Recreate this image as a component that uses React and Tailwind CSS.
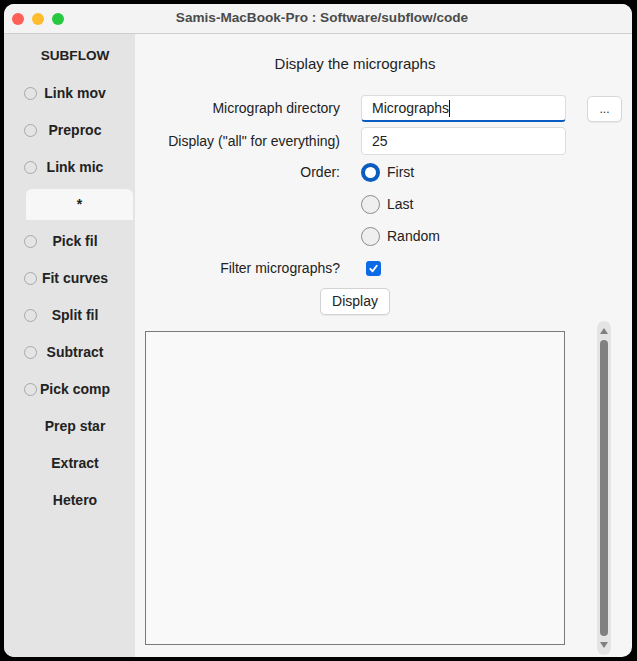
import React, { useState } from "react";

const font = { fontFamily: '"Liberation Sans", Arial, sans-serif' };

const steps = [
  { name: "Link mov", radio: true },
  { name: "Preproc", radio: true },
  { name: "Link mic", radio: true },
  { name: "*", tab: true },
  { name: "Pick fil", radio: true },
  { name: "Fit curves", radio: true },
  { name: "Split fil", radio: true },
  { name: "Subtract", radio: true },
  { name: "Pick comp", radio: true },
  { name: "Prep star", radio: false },
  { name: "Extract", radio: false },
  { name: "Hetero", radio: false },
];

const SideItem = ({ step }) => {
  if (step.tab) {
    return (
      <div className="h-[37px] flex items-center pl-[22px] pr-[2px]">
        <div className="h-[31px] w-full bg-[#f7f7f7] rounded-t-[6px] flex items-center justify-center text-[14px] font-bold text-[#222]">
          {step.name}
        </div>
      </div>
    );
  }
  return (
    <div className="h-[37px] flex items-center pl-[20px]">
      <span
        className={
          "w-[13px] h-[13px] shrink-0 rounded-full border " +
          (step.radio ? "border-[#a8a8a8]" : "border-transparent")
        }
      />
      <span className="w-[76px] text-center text-[14px] font-bold text-[#222] whitespace-nowrap">
        {step.name}
      </span>
    </div>
  );
};

const OrderRadio = ({ label, checked, onClick }) => (
  <div className="h-[32px] flex items-center gap-[7px] cursor-pointer" onClick={onClick}>
    {checked ? (
      <span className="w-[19px] h-[19px] rounded-full border-[4px] border-[#0b5cc0] bg-white" />
    ) : (
      <span className="w-[19px] h-[19px] rounded-full border border-[#8c8c8c] bg-[#efefef]" />
    )}
    <span className="text-[14px] text-[#222]">{label}</span>
  </div>
);

const App = () => {
  const [count, setCount] = useState("25");
  const [order, setOrder] = useState("First");
  const [filter, setFilter] = useState(true);

  return (
    <div className="w-[637px] h-[661px] bg-black pt-[4px] pl-[4px]" style={font}>
      <div className="w-[628px] h-[653px] rounded-[10px] overflow-hidden flex flex-col bg-[#f6f6f6]">
        {/* title bar */}
        <div className="h-[30px] shrink-0 flex items-center bg-[#f3f3f3] border-b border-[#cfcfcf]">
          <div className="flex gap-[8px] pl-[8px]">
            <span className="w-[12px] h-[12px] rounded-full bg-[#fe5f57]" />
            <span className="w-[12px] h-[12px] rounded-full bg-[#febc2e]" />
            <span className="w-[12px] h-[12px] rounded-full bg-[#28c840]" />
          </div>
          <div className="flex-1 text-center text-[13.6px] font-bold text-[#4b4b4b] pr-[52px]">
            Samis-MacBook-Pro : Software/subflow/code
          </div>
        </div>

        <div className="flex flex-1">
          {/* sidebar */}
          <div className="w-[131px] shrink-0 bg-[#e4e4e4] pt-[4px]">
            <div className="h-[37px] flex items-center pl-[33px]">
              <span className="w-[76px] text-center text-[13.6px] font-bold text-[#222]">SUBFLOW</span>
            </div>
            {steps.map((s) => (
              <SideItem key={s.name} step={s} />
            ))}
          </div>

          {/* main */}
          <div className="flex-1 flex flex-col">
            <div className="ml-[10px] w-[420px] pt-[21px] text-center text-[15px] text-[#1e1e1e] leading-[18px]">
              Display the micrographs
            </div>

            <div className="grid grid-cols-[205px_205px_35px] gap-x-[21px] mt-[22px] text-[14px] text-[#222]">
              <div className="h-[27px] flex items-center justify-end">Micrograph directory</div>
              {/* focused entry with caret */}
              <div className="h-[27px] bg-white border border-[#dcdcdc] border-b-2 border-b-[#0b5cc0] rounded-[4px] px-[10px] flex items-center">
                <span>Micrographs</span>
                <span className="w-[1px] h-[17px] bg-[#111]" />
              </div>
              <button className="h-[26px] mt-[1px] bg-white border border-[#d8d8d8] rounded-[5px] text-[12px] text-[#333] shadow-[0_1px_1px_rgba(0,0,0,0.06)]">
                ...
              </button>

              <div className="h-[28px] mt-[5px] flex items-center justify-end">
                Display ("all" for everything)
              </div>
              <input
                value={count}
                onChange={(e) => setCount(e.target.value)}
                className="h-[28px] mt-[5px] bg-white border border-[#dcdcdc] rounded-[4px] px-[10px] text-[14px] outline-none"
                style={font}
              />
              <div />

              <div className="h-[32px] mt-[1px] flex items-center justify-end">Order:</div>
              <div className="mt-[1px]">
                {["First", "Last", "Random"].map((o) => (
                  <OrderRadio key={o} label={o} checked={order === o} onClick={() => setOrder(o)} />
                ))}
              </div>
              <div />

              <div className="h-[31px] mt-[1px] flex items-center justify-end">Filter micrographs?</div>
              <div className="h-[31px] mt-[1px] flex items-center pl-[5px]">
                <button
                  onClick={() => setFilter(!filter)}
                  className={
                    "w-[15px] h-[15px] rounded-[3px] flex items-center justify-center " +
                    (filter ? "bg-[#0b6ae6]" : "bg-white border border-[#999]")
                  }
                >
                  {filter && (
                    <svg width="11" height="11" viewBox="0 0 12 12">
                      <path d="M2.5 6.5 L5 9 L9.5 3" fill="none" stroke="white" strokeWidth="2" strokeLinecap="round" strokeLinejoin="round" />
                    </svg>
                  )}
                </button>
              </div>
              <div />
            </div>

            <div className="ml-[10px] w-[420px] flex justify-center mt-[4px]">
              <button className="w-[70px] h-[27px] bg-white border border-[#d2d2d2] rounded-[5px] text-[14px] text-[#222] shadow-[0_1px_1px_rgba(0,0,0,0.06)]">
                Display
              </button>
            </div>

            <div className="flex items-center mt-[6px] pl-[10px]">
              <div className="w-[420px] h-[314px] bg-[#f9f9f9] border border-[#7a7a7a]" />
              <div className="ml-[32px] w-[14px] h-[334px] rounded-full bg-[#e4e4e4] flex flex-col items-center py-[7px]">
                <svg width="8" height="6" viewBox="0 0 8 6">
                  <path d="M4 0 L8 6 L0 6 Z" fill="#808080" />
                </svg>
                <div className="w-[8px] flex-1 my-[6px] rounded-full bg-[#808080]" />
                <svg width="8" height="6" viewBox="0 0 8 6">
                  <path d="M0 0 L8 0 L4 6 Z" fill="#808080" />
                </svg>
              </div>
            </div>
          </div>
        </div>
      </div>
    </div>
  );
};

export default App;
